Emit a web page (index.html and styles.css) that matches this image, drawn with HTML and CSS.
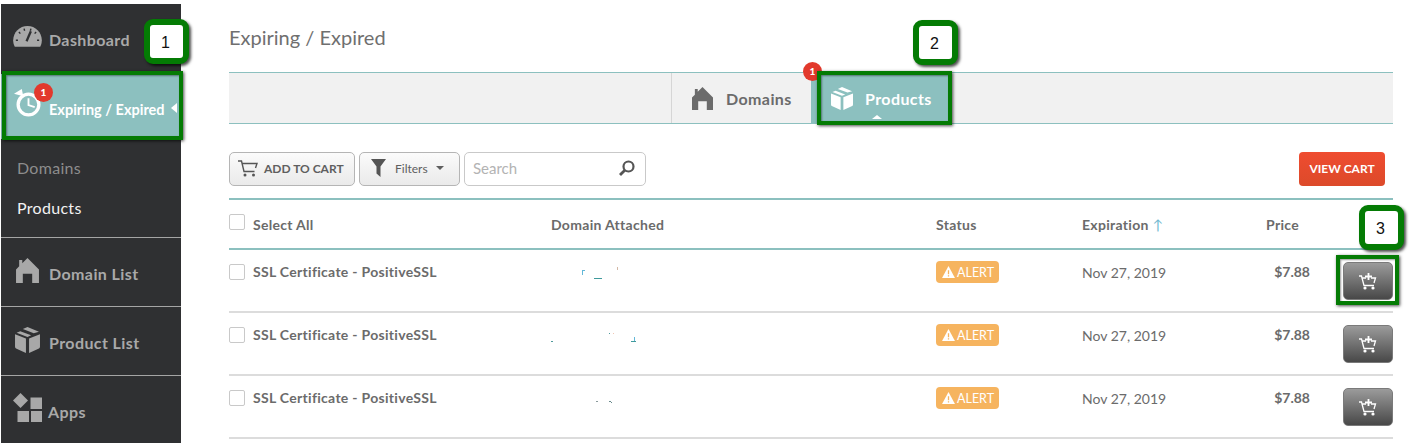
FILE: index.html
```html
<!DOCTYPE html>
<html lang="en">
<head>
<meta charset="utf-8">
<title>Expiring / Expired</title>
<link rel="stylesheet" href="styles.css">
</head>
<body>
<div class="page">
  <aside class="sidebar">
    <a class="nav-item nav-dash">
      <svg class="nav-icon gauge" viewBox="0 0 30 22"><path d="M15 0C6.700 0 0 6.700 0 15c0 2.500.6 4.800 1.700 6.800h26.600C29.400 19.800 30 17.500 30 15 30 6.700 23.300 0 15 0z" fill="#a8a8a8"/><g stroke="#2f3032" stroke-width="1.500" fill="none"><path d="M5 15H2.800M7.500 8 6 6.300M12 5l-.6-2.300M18 5l.6-2.300M25 15h2.200M22.500 8 24 6.300"/><path d="M14 16 18.500 5.500" stroke-width="2.400"/></g></svg>
      <span>Dashboard</span>
    </a>
    <a class="nav-item nav-active">
      <svg class="nav-icon watch" viewBox="0 0 28 28"><circle cx="14" cy="16" r="10" fill="none" stroke="#fff" stroke-width="3.200"/><path d="M14 10v6.500l6 2" fill="none" stroke="#fff" stroke-width="1.800"/><path d="M0 5.500 7.500 1 9 8z" fill="#fff"/></svg>
      <span class="count count-nav">1</span>
      <span>Expiring / Expired</span>
      <i class="caret-left"></i>
    </a>
    <div class="subnav">
      <a class="sub-item">Domains</a>
      <a class="sub-item sub-on">Products</a>
    </div>
    <a class="nav-item nav-line">
      <svg class="nav-icon house" viewBox="0 0 22 24"><path d="M11 0 22 11v13h-6.500v-9h-9v9H0V11l3-3V2h3v3z" fill="#a8a8a8"/></svg>
      <span>Domain List</span>
    </a>
    <a class="nav-item nav-line">
      <svg class="nav-icon box" viewBox="0 0 24 25"><path d="M0 7 10.500 11v14L1.500 21Q0 20.500 0 19zM24 7l-10.500 4v14l9-4q1.500-.5 1.500-2zM12 9.500 1.500 5.500 5 4l10.500 4zM18 6 7.500 2 12 0l11 4.500z" fill="#a8a8a8"/></svg>
      <span>Product List</span>
    </a>
    <a class="nav-item nav-line nav-apps">
      <svg class="nav-icon apps" viewBox="0 0 29 29"><path d="M7.500 0 15 7.500 7.500 15 0 7.500z" fill="#a8a8a8"/><path d="M17.500 4.500H29V16H17.500zM4.500 18H16v11H4.500zM18 18h11v11H18z" fill="#a8a8a8"/></svg>
      <span>Apps</span>
    </a>
  </aside>

  <main class="content">
    <h1 class="title">Expiring / Expired</h1>

    <nav class="tabs">
      <a class="tab">
        <svg class="tab-icon" viewBox="0 0 22 24"><path d="M11 0 22 11v13h-6.500v-9h-9v9H0V11l3-3V2h3v3z" fill="#6b6b6b"/></svg>
        <span>Domains</span>
      </a>
      <a class="tab tab-on">
        <span class="count count-tab">1</span>
        <svg class="tab-icon tab-box" viewBox="0 0 24 25"><path d="M0 7 10.500 11v14L1.500 21Q0 20.500 0 19zM24 7l-10.500 4v14l9-4q1.500-.5 1.500-2zM12 9.500 1.500 5.500 5 4l10.500 4zM18 6 7.500 2 12 0l11 4.500z" fill="#fff"/></svg>
        <span>Products</span>
        <i class="caret-up"></i>
      </a>
    </nav>

    <div class="toolbar">
      <button class="btn btn-cart">
        <svg class="cart-svg" viewBox="0 0 20 17"><path d="M0 1h3.500l2.500 10.500h10.500M4.500 3.500H19l-1.500 4.500" fill="none" stroke="#555" stroke-width="1.400"/><circle cx="7" cy="15" r="1.500" fill="#555"/><circle cx="15.500" cy="15" r="1.500" fill="#555"/></svg>
        ADD TO CART
      </button>
      <button class="btn btn-filter">
        <svg class="funnel" viewBox="0 0 15 18"><path d="M0 0h15L9.500 7.500V18L5.500 14.500v-7z" fill="#555"/></svg>
        Filters
        <i class="caret-down"></i>
      </button>
      <label class="search">
        <span class="search-text">Search</span>
        <svg class="search-svg" viewBox="0 0 16 16"><circle cx="9.500" cy="6.500" r="5" fill="none" stroke="#555" stroke-width="2.200"/><path d="M5.800 10.200 1 15" stroke="#555" stroke-width="2.800"/></svg>
      </label>
      <button class="btn-view">VIEW CART</button>
    </div>

    <section class="table">
      <div class="row row-head">
        <div class="cell-name"><i class="check check-head"></i>Select All</div>
        <div>Domain Attached</div>
        <div>Status</div>
        <div>Expiration <span class="sort">↑</span></div>
        <div class="cell-price head-price">Price</div>
        <div></div>
      </div>

      <div class="row">
        <div class="cell-name"><i class="check"></i>SSL Certificate - PositiveSSL</div>
        <svg class="specks" viewBox="0 0 100 63"><path d="M31 20h3v1h-2v4h-1z" fill="#63b8d8"/><path d="M43 28h8v1h-8z" fill="#3f9a9c"/><path d="M66 17h1v3h-1z" fill="#d3b8a6"/></svg>
        <div><span class="alert"><svg class="warn" viewBox="0 0 14 13"><path d="M7 0 14 13H0z" fill="#fff"/><path d="M6.300 4.500h1.400v4.500H6.300zM6.300 10h1.400v1.500H6.300z" fill="#f6b45f"/></svg>ALERT</span></div>
        <div class="cell-date">Nov 27, 2019</div>
        <div class="cell-price">$7.88</div>
        <div class="cell-action"><button class="btn-add"><svg class="add-svg" viewBox="0 0 18 18"><path d="M0 4h2.500l2.500 9.500h10M3.500 6H7M12 6h4.500l-1.500 5" fill="none" stroke="#fff" stroke-width="1.300"/><path d="M9.500 1v7M6 4.500h7" stroke="#fff" stroke-width="1.800"/><circle cx="6" cy="16" r="1.600" fill="#fff"/><circle cx="14" cy="16" r="1.600" fill="#fff"/></svg></button></div>
      </div>

      <div class="row">
        <div class="cell-name"><i class="check"></i>SSL Certificate - PositiveSSL</div>
        <svg class="specks" viewBox="0 0 100 63"><path d="M0 28h2v1H0z" fill="#4f9a9c"/><path d="M58 20h1v1h-1z" fill="#4f9a9c"/><path d="M62 20h1v1h-1z" fill="#f1c6b4"/><path d="M80 28h5v1h-5z" fill="#3f9a9c"/><path d="M83 24h1v4h-1z" fill="#63b8d8"/></svg>
        <div><span class="alert"><svg class="warn" viewBox="0 0 14 13"><path d="M7 0 14 13H0z" fill="#fff"/><path d="M6.300 4.500h1.400v4.500H6.300zM6.300 10h1.400v1.500H6.300z" fill="#f6b45f"/></svg>ALERT</span></div>
        <div class="cell-date">Nov 27, 2019</div>
        <div class="cell-price">$7.88</div>
        <div class="cell-action"><button class="btn-add"><svg class="add-svg" viewBox="0 0 18 18"><path d="M0 4h2.500l2.500 9.500h10M3.500 6H7M12 6h4.500l-1.500 5" fill="none" stroke="#fff" stroke-width="1.300"/><path d="M9.500 1v7M6 4.500h7" stroke="#fff" stroke-width="1.800"/><circle cx="6" cy="16" r="1.600" fill="#fff"/><circle cx="14" cy="16" r="1.600" fill="#fff"/></svg></button></div>
      </div>

      <div class="row">
        <div class="cell-name"><i class="check"></i>SSL Certificate - PositiveSSL</div>
        <svg class="specks" viewBox="0 0 100 63"><path d="M45 25h2v1h-2z" fill="#8a9a9c"/><path d="M58 25h2v1h-2zM60 26h1v1h-1z" fill="#6a8a8c"/></svg>
        <div><span class="alert"><svg class="warn" viewBox="0 0 14 13"><path d="M7 0 14 13H0z" fill="#fff"/><path d="M6.300 4.500h1.400v4.500H6.300zM6.300 10h1.400v1.500H6.300z" fill="#f6b45f"/></svg>ALERT</span></div>
        <div class="cell-date">Nov 27, 2019</div>
        <div class="cell-price">$7.88</div>
        <div class="cell-action"><button class="btn-add"><svg class="add-svg" viewBox="0 0 18 18"><path d="M0 4h2.500l2.500 9.500h10M3.500 6H7M12 6h4.500l-1.500 5" fill="none" stroke="#fff" stroke-width="1.300"/><path d="M9.500 1v7M6 4.500h7" stroke="#fff" stroke-width="1.800"/><circle cx="6" cy="16" r="1.600" fill="#fff"/><circle cx="14" cy="16" r="1.600" fill="#fff"/></svg></button></div>
      </div>
    </section>
  </main>

  <div class="mark mark-nav"></div>
  <div class="mark mark-tab"></div>
  <div class="mark mark-add"></div>
  <div class="step step-1">1</div>
  <div class="step step-2">2</div>
  <div class="step step-3">3</div>
</div>
</body>
</html>
```

FILE: styles.css
```css
* { box-sizing: border-box; }
html, body { margin: 0; padding: 0; }
body {
  background: #fff;
  font-family: Lato, "Open Sans", sans-serif;
  color: #6b6b6b;
}
.page {
  position: relative;
  width: 1414px;
  height: 443px;
  overflow: hidden;
  display: flex;
  border-top: 4px solid #fff;
}
.page::before {
  content: "";
  position: absolute;
  left: 0;
  right: 0;
  top: -1px;
  height: 1px;
  background: #d4d4d4;
}

/* sidebar */
.sidebar {
  flex: none;
  width: 180px;
  margin-left: 1px;
  background: #2f3032;
  color: #a9a9a9;
  font-weight: 700;
  font-size: 16px;
  letter-spacing: .4px;
}
.nav-item {
  position: relative;
  display: flex;
  align-items: center;
  height: 69px;
  padding-left: 48px;
}
.nav-icon { position: absolute; display: block; }
.nav-dash { height: 70px; padding-top: 1px; }
.gauge { left: 12px; top: 22px; width: 29px; height: 21px; }
.nav-active {
  height: 65px;
  background: #8cc0bf;
  color: #fff;
  font-size: 14.500px;
  letter-spacing: 0;
  padding-top: 5px;
}
.watch { left: 13px; top: 14px; width: 29px; height: 29px; }
.caret-left {
  position: absolute;
  right: 4px;
  top: 29px;
  border: 5px solid transparent;
  border-left: 0;
  border-right: 6px solid #fff;
}
.count {
  position: absolute;
  width: 19px;
  height: 19px;
  border-radius: 50%;
  background: #e2392c;
  color: #fff;
  font-size: 10px;
  font-weight: 900;
  letter-spacing: 0;
  line-height: 19px;
  text-align: center;
}
.count-nav { left: 33px; top: 9px; }
.subnav {
  height: 98px;
  padding: 9px 0 0 16px;
  font-size: 16px;
  font-weight: 400;
  letter-spacing: .3px;
}
.sub-item { display: block; height: 40px; line-height: 40px; color: #8d8d8d; }
.sub-on { color: #f2f2f2; }
.nav-line { border-top: 1px solid #a5a5a5; padding-top: 2px; }
.house { left: 15px; top: 20px; width: 23px; height: 25px; }
.box { left: 14px; top: 20px; width: 25px; height: 26px; }
.nav-line.nav-apps { padding-top: 3px; padding-left: 47px; }
.apps { left: 12px; top: 17px; width: 29px; height: 29px; }

/* main */
.content { flex: none; width: 1164px; margin-left: 48px; }
.title {
  margin: 0;
  height: 68px;
  padding-top: 18px;
  font-size: 20px;
  line-height: 30px;
  font-weight: 400;
  color: #6f6f6f;
}
.tabs {
  display: flex;
  justify-content: center;
  height: 52px;
  background: #f1f1f1;
  border-top: 1px solid #8cc0bf;
  border-bottom: 1px solid #8cc0bf;
}
.tab {
  position: relative;
  display: flex;
  align-items: center;
  width: 140px;
  padding-left: 20px;
  font-size: 16px;
  font-weight: 700;
  letter-spacing: .4px;
  color: #6b6b6b;
  border-left: 1px solid #d6d6d6;
}
.tab-icon { width: 21px; height: 23px; margin-right: 13px; display: block; }
.tab-on {
  background: #8cc0bf;
  color: #fff;
  border-left: 0;
}
.tab-box { width: 22px; height: 23px; margin-right: 12px; }
.count-tab { left: -8px; top: -11px; }
.caret-up {
  position: absolute;
  left: 61px;
  bottom: 4px;
  border: 5px solid transparent;
  border-top: 0;
  border-bottom: 4px solid #fff;
}

/* toolbar */
.toolbar {
  display: flex;
  align-items: center;
  gap: 4px;
  height: 34px;
  margin-top: 28px;
}
.btn {
  display: flex;
  align-items: center;
  height: 34px;
  padding: 0 0 2px;
  border: 1px solid #b5b5b5;
  border-radius: 5px;
  background: linear-gradient(#fbfbfb, #eaeaea);
  font-family: inherit;
  font-size: 12px;
  color: #5f5f5f;
}
.btn-cart { width: 126px; font-weight: 700; padding-left: 8px; }
.cart-svg { width: 20px; height: 17px; margin-right: 6px; }
.btn-filter { width: 101px; padding-left: 11px; font-size: 12px; }
.funnel { width: 15px; height: 18px; margin-right: 9px; }
.caret-down {
  margin-left: 8px;
  border: 4px solid transparent;
  border-bottom: 0;
  border-top: 4px solid #5f5f5f;
}
.search {
  display: flex;
  align-items: center;
  justify-content: space-between;
  width: 182px;
  height: 34px;
  padding: 0 10px 2px 8px;
  border: 1px solid #c9c9c9;
  border-radius: 5px;
  font-size: 15px;
  color: #b3b3b3;
}
.search-svg { width: 16px; height: 16px; }
.btn-view {
  width: 86px;
  height: 34px;
  margin-left: 649px;
  padding: 0 0 2px;
  border: 0;
  border-radius: 4px;
  background: linear-gradient(#ef4c30, #dc4a2a);
  color: #fff;
  font-family: inherit;
  font-size: 12px;
  font-weight: 700;
}

/* table */
.table { margin-top: 12px; border-top: 2px solid #8cc0bf; }
.row {
  display: grid;
  grid-template-columns: 322px 385px 146px 146px 82px 83px;
  height: 63px;
  border-bottom: 2px solid #dcdcdc;
  padding-top: 12px;
  font-size: 14px;
  font-weight: 700;
  letter-spacing: .3px;
  line-height: 20px;
}
.row > .specks { margin-top: -12px; width: 100px; height: 63px; display: block; }
.row-head {
  height: 50px;
  padding-top: 15px;
  border-bottom: 2px solid #8cc0bf;
}
.cell-name { display: flex; align-items: center; height: 20px; }
.check {
  flex: none;
  width: 16px;
  height: 16px;
  margin-right: 8px;
  border: 1px solid #c9c9c9;
  border-radius: 2px;
  background: #fff;
}
.check-head { margin-top: -6px; }
.sort { color: #6fb7d0; font-weight: 400; }
.alert {
  display: flex;
  align-items: center;
  height: 22px;
  width: 63px;
  margin-top: -1px;
  padding: 2px 0 0 6px;
  border-radius: 4px;
  background: #f6b45f;
  color: #fff;
  font-size: 12.500px;
  font-weight: 400;
  letter-spacing: 0;
}
.warn { width: 13px; height: 12px; margin: -2px 2px 0 0; }
.row > .cell-date { grid-column: 4; padding-top: 1px; font-weight: 400; letter-spacing: 0; }
.cell-price { text-align: right; letter-spacing: 0; }
.row-head .cell-price { letter-spacing: .3px; }
.head-price { padding-right: 11px; }
.cell-action { display: flex; justify-content: flex-end; }
.btn-add {
  display: flex;
  align-items: center;
  justify-content: center;
  width: 50px;
  height: 38px;
  padding: 0;
  border: 1px solid #7a7a7a;
  border-radius: 5px;
  background: linear-gradient(#9b9b9b, #484848);
}
.add-svg { width: 18px; height: 18px; }

/* annotations */
.mark, .step { position: absolute; }
.mark {
  border: 4px solid #047b04;
  box-shadow: 1px 1px 3px rgba(0,0,0,.7), inset 1px 1px 2px rgba(0,0,0,.4);
}
.mark-nav { left: 2px; top: 67px; width: 181px; height: 69px; }
.mark-tab { left: 817px; top: 67px; width: 135px; height: 54px; }
.mark-add { left: 1336px; top: 251px; width: 63px; height: 50px; }
.step {
  width: 45px;
  height: 45px;
  border: 6px solid #047b04;
  border-radius: 9px;
  background: #fff;
  box-shadow: 2px 2px 3px rgba(0,0,0,.7);
  color: #111;
  font-family: "Liberation Sans", sans-serif;
  font-size: 16px;
  line-height: 36px;
  text-align: center;
  text-indent: -2px;
}
.step-1 { left: 144px; top: 15px; }
.step-2 { left: 913px; top: 16px; }
.step-3 { left: 1359px; top: 201px; }
```
